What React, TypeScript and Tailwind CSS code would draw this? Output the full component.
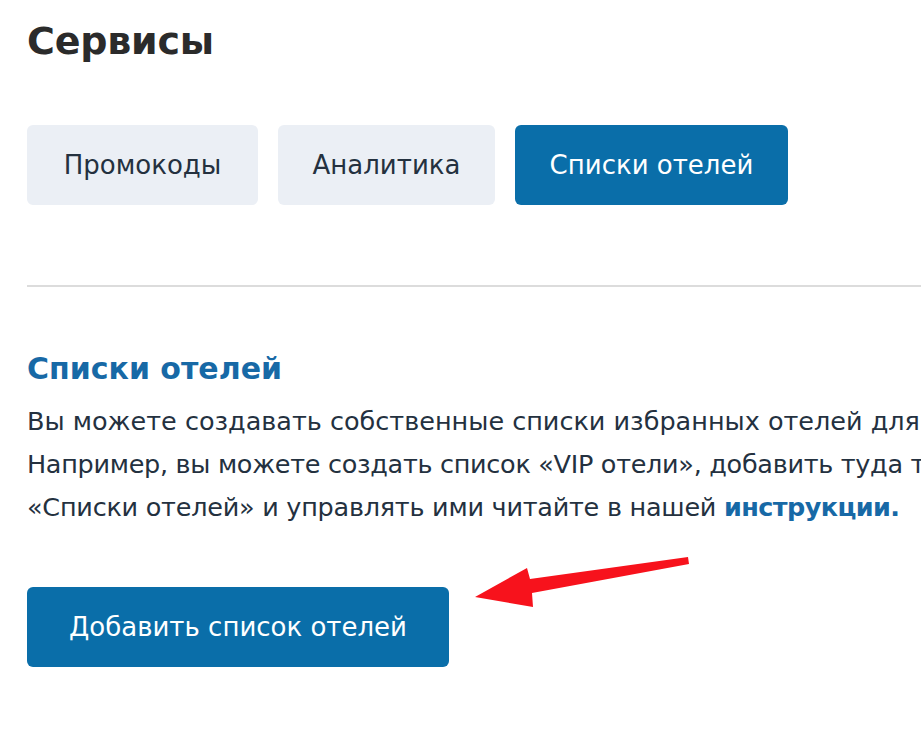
export default function App() {
  const font = { fontFamily: '"DejaVu Sans", "Noto Sans", sans-serif' };
  return (
    <div className="relative min-h-screen w-[921px] overflow-hidden bg-white" style={font}>
      <div className="pl-[27px] pt-[17px]">
        <h1 className="text-[38px] font-bold leading-[48px] tracking-[-0.2px] text-[#2b2b2b]">Сервисы</h1>

        <div className="mt-[60px] flex gap-5">
          <button className="h-20 w-[231px] rounded-md bg-[#ebeff5] text-[26px] text-[#24313f]">
            Промокоды
          </button>
          <button className="h-20 w-[217px] rounded-md bg-[#ebeff5] text-[26px] text-[#24313f]">
            Аналитика
          </button>
          <button className="h-20 w-[273px] rounded-md bg-[#0a6ea9] text-[26px] text-white">
            Списки отелей
          </button>
        </div>

        <div className="mt-20 h-[2px] bg-[#dcdcdc]" />

        <h2 className="mt-[62px] text-[30px] font-bold leading-[40px] text-[#1769a6]">Списки отелей</h2>
        <div className="mt-[11px] whitespace-nowrap text-[25.5px] leading-[43px] text-[#24313f]">
          <p>Вы можете создавать собственные списки избранных отелей для</p>
          <p className="tracking-[-0.3px]">Например, вы можете создать список «VIP отели», добавить туда т</p>
          <p className="tracking-[-0.25px]">
            «Списки отелей» и управлять ими читайте в нашей{' '}
            <a href="#" className="font-bold tracking-[-0.6px] text-[#1769a6]">инструкции.</a>
          </p>
        </div>

        <button className="mt-[58px] h-20 w-[422px] rounded-md bg-[#0a6ea9] text-[26px] text-white">
          Добавить список отелей
        </button>
      </div>

      {/* red arrow */}
      <svg className="absolute left-0 top-0" width="921" height="733" viewBox="0 0 921 733">
        <polygon
          points="475,597 527,568 530,579 688,557 689,564 532,593 533,607"
          fill="#f7121c"
        />
      </svg>
    </div>
  );
}
